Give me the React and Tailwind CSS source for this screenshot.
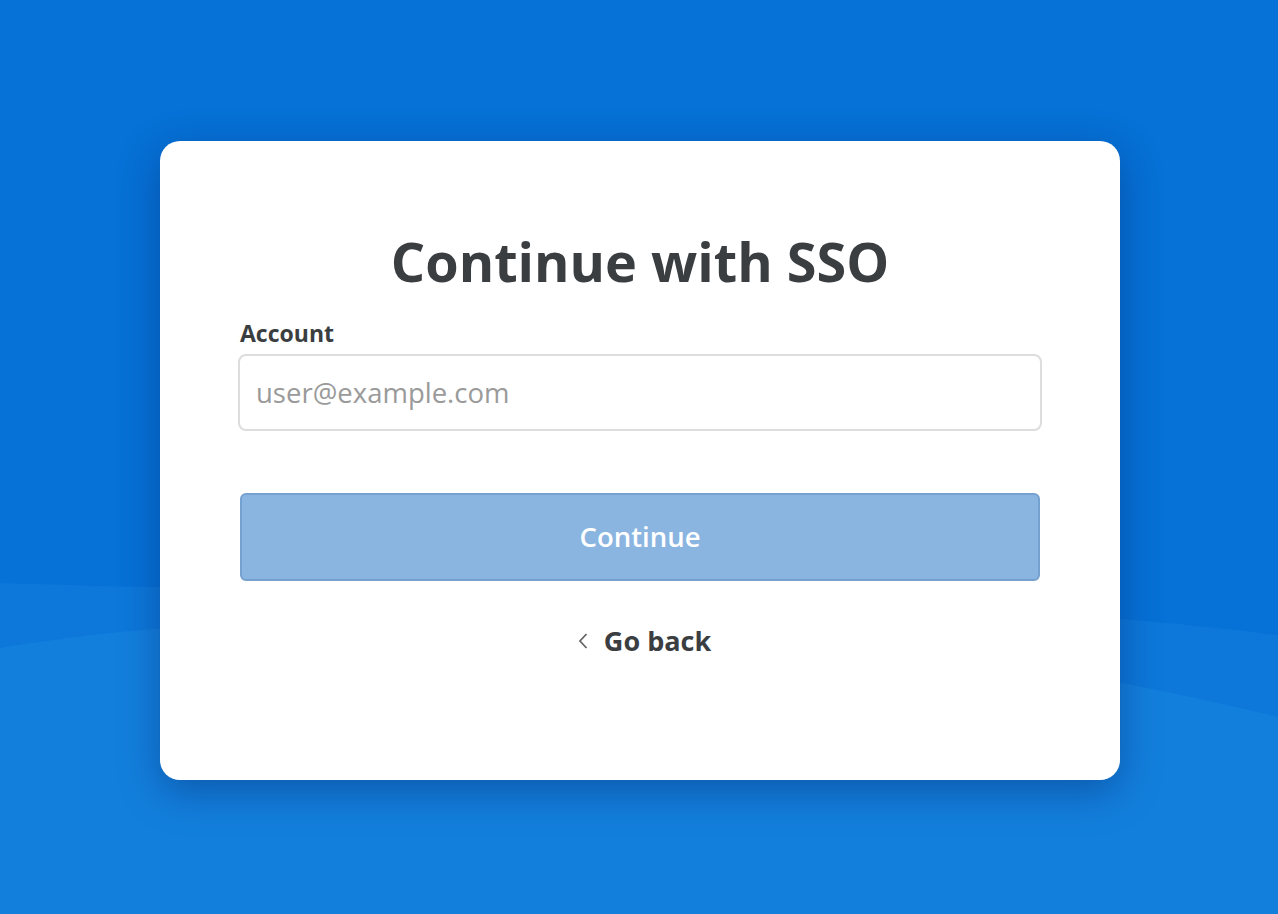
export default function App() {
  return (
    <div className="relative h-[914px] w-full overflow-hidden bg-[#0671d6] font-['Open_Sans',sans-serif]">
      <svg className="absolute inset-0" width="1278" height="914" viewBox="0 0 1278 914" preserveAspectRatio="none">
        <path d="M0 583 C 400 596, 900 588, 1278 635 L1278 914 L0 914 Z" fill="#0d78da" />
        <path d="M0 648 C 300 598, 800 600, 1278 717 L1278 914 L0 914 Z" fill="#137fdd" />
      </svg>

      <div className="relative flex justify-center pl-[2px] pt-[141px]">
        <div className="flex h-[639px] w-[960px] flex-col rounded-[20px] bg-white px-[80px] pt-[86px] shadow-[0_12px_40px_rgba(0,20,80,0.35)]">
          <h1 className="text-center text-[54px] font-bold leading-[68px] text-[#3b3e41]">Continue with SSO</h1>

          <label className="mt-[24px] text-[23px] font-bold leading-[28px] text-[#3b3e41]">Account</label>
          <input
            className="mx-[-2px] mt-[7px] h-[77px] rounded-[8px] border-2 border-[#dddddd] bg-white px-[16px] text-[27.5px] text-[#3b3e41] outline-none placeholder:text-[#9a9a9a]"
            placeholder="user@example.com"
          />

          <button className="mt-[62px] h-[88px] rounded-[6px] border-2 border-[#74a1cf] bg-[#8ab5e0] text-[27.5px] font-semibold text-white">
            Continue
          </button>

          <button className="mt-[40px] flex items-center justify-center gap-[15px] pl-[8px] text-[27px] font-bold text-[#3b3e41]">
            <svg width="12" height="20" viewBox="0 0 12 20" fill="none">
              <path d="M9.5 3 L3 10 L9.5 17" stroke="#666" strokeWidth="1.8" />
            </svg>
            Go back
          </button>
        </div>
      </div>
    </div>
  )
}
